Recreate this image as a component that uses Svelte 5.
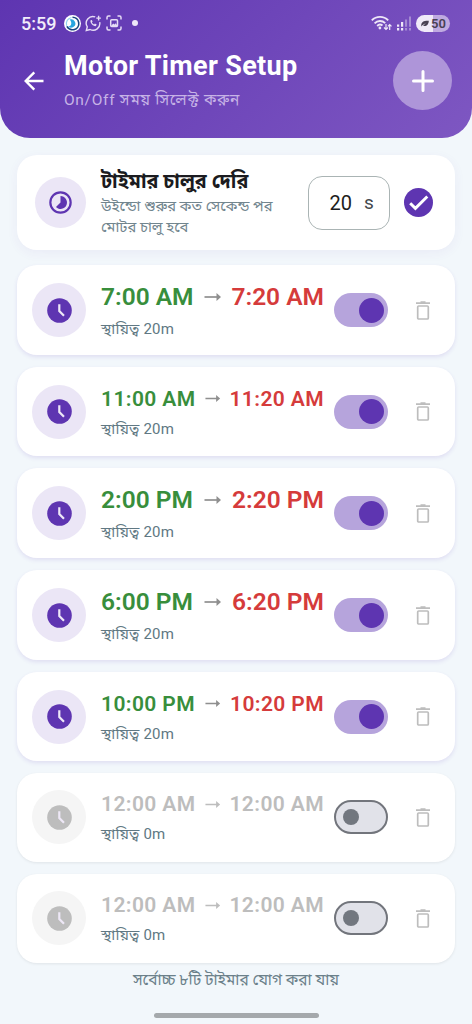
<script>
    let delay = 20;

    let timers = [
        { start: "7:00 AM", end: "7:20 AM", minutes: 20, enabled: true },
        { start: "11:00 AM", end: "11:20 AM", minutes: 20, enabled: true },
        { start: "2:00 PM", end: "2:20 PM", minutes: 20, enabled: true },
        { start: "6:00 PM", end: "6:20 PM", minutes: 20, enabled: true },
        { start: "10:00 PM", end: "10:20 PM", minutes: 20, enabled: true },
        { start: "12:00 AM", end: "12:00 AM", minutes: 0, enabled: false },
        { start: "12:00 AM", end: "12:00 AM", minutes: 0, enabled: false }
    ];

    function remove(timer) {
        timers = timers.filter(item => item !== timer);
    }
</script>

<div class="screen">
    <header>
        <div class="status">
            <span class="clock">5:59</span>
            <svg class="app-icon" width="17" height="17" viewBox="0 0 17 17">
                <circle cx="8.5" cy="8.5" r="8.5" fill="#fff" />
                <path d="M8.5 2.2a6.3 6.3 0 1 1-5.6 9.2" fill="none" stroke="#17457f" stroke-width="1.6" />
                <path d="M2.7 10.8A6.3 6.3 0 0 1 7.4 2.5" fill="none" stroke="#8fd3ee" stroke-width="1.2" />
                <path d="M5.5 4.6a4.2 4.2 0 1 1-1.4 6.8c3.4.2 4.5-3.9 1.4-6.8z" fill="#27a5df" />
            </svg>
            <svg class="app-icon" width="17" height="17" viewBox="0 0 17 17" fill="none" stroke="#e6dcf5" stroke-width="1.4">
                <path d="M10.2 1.9A6.7 6.7 0 0 0 2.3 11.8L1.3 15.5l3.8-1A6.7 6.7 0 0 0 14.7 7.2" />
                <path d="M13.6.8v4.6M11.3 3.1h4.6" />
                <path d="M5.6 5.2c-1 2.3 2.5 6.3 5.3 5.9l.8-1.5-1.8-1-.8.8c-1-.4-1.8-1.2-2.2-2.2l.7-.8-.8-1.5z" fill="#e6dcf5" stroke="none" />
            </svg>
            <svg width="16" height="16" viewBox="0 0 16 16" fill="none" stroke="#e6dcf5" stroke-width="1.5">
                <path d="M1 4.5V2.5Q1 1 2.5 1h2M11.5 1h2Q15 1 15 2.5v2M15 11.5v2q0 1.5-1.5 1.5h-2M4.5 15h-2Q1 15 1 13.5v-2" />
                <rect x="4.7" y="4.8" width="6.8" height="6.6" rx="1" />
                <path d="M5 11l2.2-2.5 1.3 1 1.3-1.2L11.5 11z" fill="#e6dcf5" stroke="none" />
            </svg>
            <span class="dot"></span>

            <div class="system">
                <svg width="21" height="16" viewBox="0 0 21 16" fill="none" stroke="#eee7f8" stroke-width="1.9">
                    <path d="M.8 5.3a11.5 11.5 0 0 1 16.4 0M3.6 8.3a7.6 7.6 0 0 1 10.6-.2M6.2 11a4 4 0 0 1 5.3-.4" />
                    <circle cx="8.9" cy="13" r="1.4" fill="#eee7f8" stroke="none" />
                    <path d="M15 9v5.5M13 12.5l2 2 2-2M18.7 15V9.5M16.9 11.3l1.8-1.8 1.8 1.8" stroke-width="1.2" />
                </svg>
                <svg width="14" height="15" viewBox="0 0 14 15">
                    <path d="M0 8.5h2.2v2.2H0zM4 6h2.2v4.7H4zM0 12h2.2v2.5H0zM4 12h2.2v2.5H4z" fill="#eee7f8" />
                    <path d="M8 3.5h2.1v7.2H8zM12 .5h2v10.2h-2zM8 12h2.1v2.5H8zM12 12h2v2.5h-2z" fill="#a58bd3" />
                </svg>
                <span class="battery">
                    <svg width="8" height="7" viewBox="0 0 8 7"><path d="M.3 6.5C-.2 1.5 3.2.4 7.8.7 7.7 4.7 5 7 2.1 5.7L4.9 3 1.4 5.2z" fill="#494153" /></svg>
                    50
                </span>
            </div>
        </div>

        <div class="title-bar">
            <button class="back" aria-label="Back">
                <svg width="20" height="20" viewBox="0 0 20 20" fill="none" stroke="#fff" stroke-width="2.4">
                    <path d="M19.5 10H2.2M10.3 1.3L1.7 10l8.6 8.7" />
                </svg>
            </button>
            <div class="heading">
                <h1>Motor Timer Setup</h1>
                <p>On/Off সময় সিলেক্ট করুন</p>
            </div>
            <button class="add" aria-label="Add">
                <svg width="22" height="22" viewBox="0 0 22 22" fill="none" stroke="#fff" stroke-width="3" stroke-linecap="round">
                    <path d="M11 1.5v19M1.5 11h19" />
                </svg>
            </button>
        </div>
    </header>

    <main>
        <section class="card delay">
            <div class="avatar small">
                <svg width="23" height="23" viewBox="0 0 24 24">
                    <circle cx="12" cy="12" r="10.6" fill="none" stroke="#5e35b1" stroke-width="2.3" />
                    <path d="M12 5.3a6.7 6.7 0 1 1-4.7 11.4L12 12z" fill="#5e35b1" />
                </svg>
            </div>
            <div class="delay-text">
                <h2>টাইমার চালুর দেরি</h2>
                <p>উইন্ডো শুরুর কত সেকেন্ড পর<br />মোটর চালু হবে</p>
            </div>
            <div class="field"><span>{delay}</span><span class="unit">s</span></div>
            <svg class="check" width="29" height="29" viewBox="0 0 29 29">
                <circle cx="14.5" cy="14.5" r="14.5" fill="#5e35b1" />
                <path d="M6.2 15.2l5.2 5.2L23.3 8.5" fill="none" stroke="#fff" stroke-width="2.9" />
            </svg>
        </section>

        {#each timers as timer}
            <section class="card timer" class:off={!timer.enabled} class:compact={timer.start.length > 7}>
                <div class="avatar">
                    <svg width="25" height="25" viewBox="0 0 25 25">
                        <circle cx="12.5" cy="12.5" r="12.3" fill="currentColor" />
                        <path d="M12.3 6.2v6.9l4.7 4.7" fill="none" stroke="#eee8f7" stroke-width="2.2" />
                    </svg>
                </div>
                <div class="info">
                    <div class="times">
                        <span class="start">{timer.start}</span>
                        <svg class="arrow" viewBox="0 0 18 10">
                            <path d="M.5 5h14" stroke="currentColor" stroke-width="1.7" />
                            <path d="M12.5 1l4.5 4-4.5 4z" fill="currentColor" />
                        </svg>
                        <span class="end">{timer.end}</span>
                    </div>
                    <p>স্থায়িত্ব {timer.minutes}m</p>
                </div>
                <button class="switch" aria-label="Toggle" on:click={() => timer.enabled = !timer.enabled}>
                    <span class="thumb"></span>
                </button>
                <button class="delete" aria-label="Delete" on:click={() => remove(timer)}>
                    <svg width="14" height="19" viewBox="0 0 14 19" fill="none" stroke="#bdbdbd" stroke-width="1.7">
                        <path d="M0 2.2h14M4.5 1.2h5" />
                        <rect x="1.7" y="5" width="10.6" height="13" rx="1" />
                    </svg>
                </button>
            </section>
        {/each}

        <p class="hint">সর্বোচ্চ ৮টি টাইমার যোগ করা যায়</p>
    </main>

    <div class="home-bar"></div>
</div>

<style>
    :global(body) {
        background: #f2f7fb;
    }

    .screen {
        box-sizing: border-box;
        display: flex;
        flex-direction: column;
        width: 472px;
        height: 1024px;
        padding-bottom: 6px;
        overflow: hidden;
        background: #f2f7fb;
        font-family: Roboto, "Noto Sans Bengali", "Noto Sans", sans-serif;
    }

    h1, h2, p {
        margin: 0;
        white-space: nowrap;
    }

    button {
        display: flex;
        align-items: center;
        justify-content: center;
        padding: 0;
        border: 0;
        background: none;
    }

    svg {
        flex: none;
    }

    header {
        box-sizing: border-box;
        height: 138px;
        padding: 13px 20px 0 21px;
        border-radius: 0 0 30px 30px;
        background: linear-gradient(135deg, #5e35b1, #7e57c2);
        color: #fff;
    }

    .status {
        display: flex;
        align-items: center;
        height: 20px;
    }

    .clock {
        width: 43px;
        font-size: 18px;
        font-weight: 500;
        color: #f2edfa;
    }

    .app-icon {
        margin-right: 4px;
    }

    .dot {
        width: 6px;
        height: 6px;
        margin-left: 10px;
        border-radius: 50%;
        background: #eee7f8;
    }

    .system {
        display: flex;
        align-items: center;
        gap: 5px;
        margin-left: auto;
        margin-right: 2px;
    }

    .battery {
        box-sizing: border-box;
        display: flex;
        align-items: center;
        gap: 2px;
        width: 34px;
        height: 17px;
        padding-left: 5px;
        border-radius: 9px;
        background: linear-gradient(90deg, #f0eaf8 50%, #bfaae0 50%);
        color: #494153;
        font-size: 13px;
        font-weight: 600;
    }

    .title-bar {
        display: flex;
        align-items: center;
        height: 60px;
        margin-top: 17.5px;
    }

    .back {
        width: 26px;
    }

    .heading {
        flex: 1;
        margin-left: 17px;
        padding-top: 1px;
    }

    h1 {
        line-height: 35px;
        font-size: 27px;
        font-weight: 700;
        letter-spacing: 0.33px;
    }

    .heading p {
        height: 26px;
        margin-top: 3px;
        line-height: 26px;
        font-size: 15.5px;
        letter-spacing: 0.7px;
        color: #c6b3e6;
    }

    .add {
        width: 59px;
        height: 59px;
        border-radius: 50%;
        background: #ae95d9;
    }

    main {
        display: flex;
        flex-direction: column;
        gap: 11.8px;
        padding: 17px 17px 0;
    }

    .card {
        box-sizing: border-box;
        display: flex;
        align-items: center;
        border-radius: 20px;
        background: #fff;
        box-shadow: 0 2px 4px rgba(94, 53, 177, 0.12);
    }

    .avatar {
        display: flex;
        align-items: center;
        justify-content: center;
        width: 54px;
        height: 54px;
        border-radius: 50%;
        background: #ebe6f6;
        color: #5e35b1;
    }

    .avatar.small {
        width: 51px;
        height: 51px;
    }

    .delay {
        height: 95px;
        margin-bottom: 3.2px;
        padding: 0 22.5px 0 18px;
        box-shadow: 0 3px 12px rgba(94, 53, 177, 0.06);
    }

    .delay-text {
        flex: 1;
        height: 76px;
        margin-left: 15px;
    }

    h2 {
        height: 31px;
        line-height: 34px;
        font-size: 19.8px;
        font-weight: 700;
        color: #1b1b20;
    }

    .delay-text p {
        line-height: 21.5px;
        font-size: 14.8px;
        color: #71858e;
    }

    .field {
        box-sizing: border-box;
        display: flex;
        align-items: center;
        width: 82px;
        height: 54px;
        padding-left: 21px;
        border: 1px solid #aab4b4;
        border-radius: 14px;
        font-size: 20px;
        color: #1d1d20;
    }

    .unit {
        margin-left: 12px;
        font-size: 19px;
        color: #45484c;
    }

    .check {
        margin-left: 14px;
    }

    .timer {
        height: 90.3px;
        padding: 0 25px 0 15px;
    }

    .timer.compact {
        height: 89px;
    }

    .info {
        width: 223px;
        margin-left: 15px;
        padding-top: 3px;
    }

    .compact .info {
        padding-top: 4px;
    }

    .times {
        display: flex;
        align-items: center;
        justify-content: space-between;
        height: 32px;
        font-size: 24.5px;
        font-weight: 600;
        white-space: nowrap;
    }

    .compact .times {
        height: 30px;
        font-size: 21px;
        letter-spacing: 0.4px;
    }

    .start {
        color: #388e3c;
    }

    .end {
        color: #d53b3b;
    }

    .arrow {
        width: 18px;
        height: 10px;
        color: #8f8f8f;
    }

    .compact .arrow {
        width: 16px;
        height: 9px;
    }

    .info p {
        height: 30px;
        line-height: 32px;
        font-size: 15px;
        letter-spacing: 0.2px;
        color: #607883;
    }

    .compact .info p {
        line-height: 31px;
    }

    .switch {
        box-sizing: border-box;
        justify-content: flex-end;
        width: 54px;
        height: 34px;
        margin-left: 10px;
        padding: 0 4px;
        border-radius: 17px;
        background: #b6a4dc;
    }

    .thumb {
        width: 25px;
        height: 25px;
        border-radius: 50%;
        background: #5e35b1;
    }

    .delete {
        margin-left: auto;
    }

    .off {
        box-shadow: 0 1px 3px rgba(0, 0, 0, 0.08);
    }

    .off .avatar {
        background: #f5f5f5;
        color: #bdbdbd;
    }

    .off .start,
    .off .end,
    .off .arrow {
        color: #bdbdbd;
    }

    .off .switch {
        justify-content: flex-start;
        padding: 0 7px;
        border: 2px solid #72757c;
        background: #e1e2e9;
    }

    .off .thumb {
        width: 16px;
        height: 16px;
        background: #72777f;
    }

    .hint {
        height: 30px;
        margin-top: -9px;
        line-height: 30px;
        text-align: center;
        font-size: 15.5px;
        color: #6b808a;
    }

    .home-bar {
        width: 165px;
        height: 5px;
        margin: auto auto 0;
        border-radius: 3px;
        background: #a5a9ac;
    }
</style>
